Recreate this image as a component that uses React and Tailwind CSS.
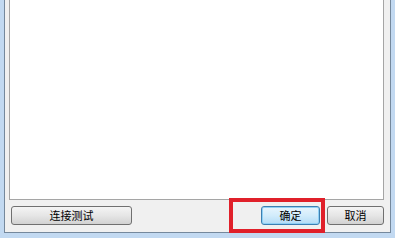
export default function App() {
    const font = { fontFamily: '"Noto Sans CJK SC", "Noto Sans", sans-serif' }

    return (
        <div className="relative w-[395px] h-[238px] bg-[#c2d9f1] px-[4px] pb-[5px] overflow-hidden" style={font}>
            <div className="h-full flex flex-col bg-[#f0f0f0] border-x border-b border-[#75889c] pl-[4px] pr-[6px]">
                <div className="h-[200px] bg-white border-x border-b border-[#a5a5a5]" />
                <div className="mt-[6px] flex justify-between">
                    <button
                        type="button"
                        className="ml-[2px] w-[121px] h-[19px] rounded-[3px] border border-[#707070] bg-gradient-to-b from-[#f4f4f4] via-[#e6e6e6] to-[#d2d2d2] text-[11px] leading-none text-black"
                    >
                        连接测试
                    </button>
                    <div className="flex gap-[7px]">
                        <button
                            type="button"
                            className="w-[59px] h-[19px] rounded-[3px] border border-[#3c7fb1] bg-gradient-to-b from-[#e8f5fd] via-[#d2ecfb] to-[#b3dcf6] shadow-[inset_0_0_0_1px_#8fd0f5] text-[11px] leading-none text-black"
                        >
                            确定
                        </button>
                        <button
                            type="button"
                            className="w-[57px] h-[19px] rounded-[3px] border border-[#707070] bg-gradient-to-b from-[#f4f4f4] via-[#e6e6e6] to-[#d2d2d2] text-[11px] leading-none text-black"
                        >
                            取消
                        </button>
                    </div>
                </div>
            </div>
            <div className="absolute left-[229px] top-[198px] w-[96px] h-[35px] border-[4px] border-[#e0202a]" />
        </div>
    )
}
